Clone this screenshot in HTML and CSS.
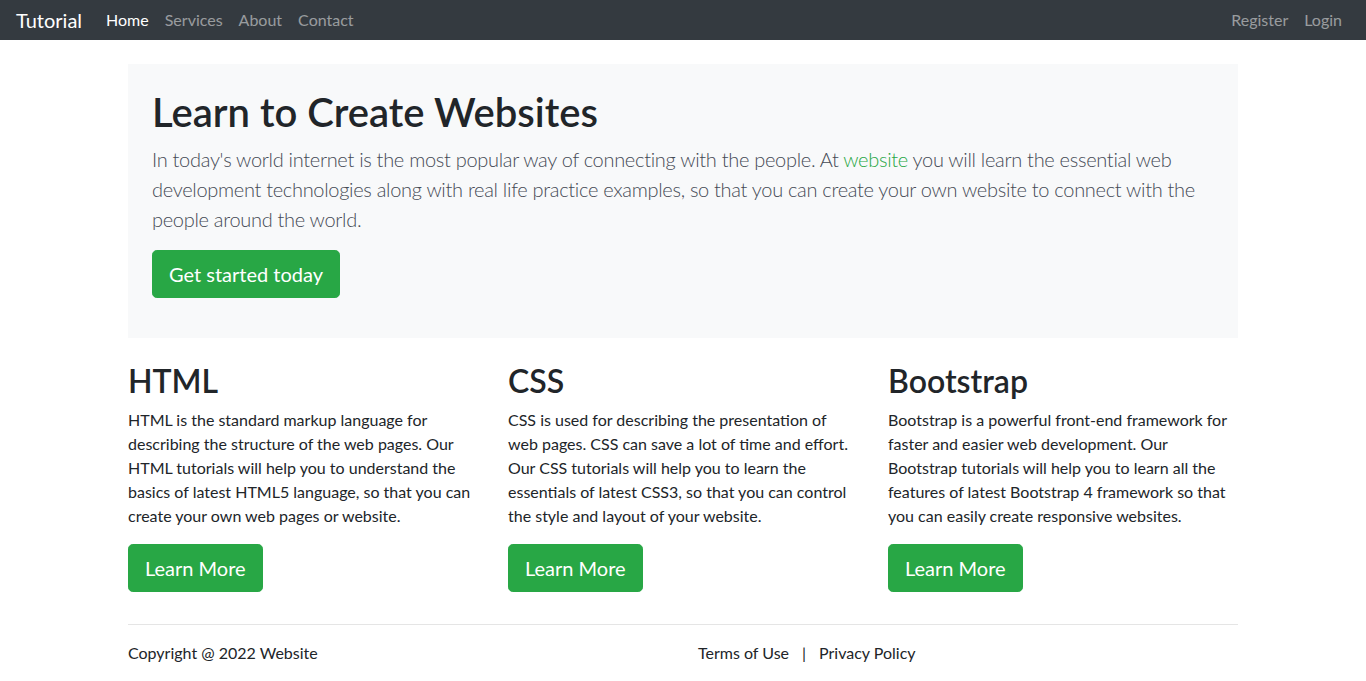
FILE: index.html
```html
<!DOCTYPE html>
<html lang="en">
<head>
<meta charset="utf-8">
<title>Tutorial</title>
<link rel="stylesheet" href="styles.css">
</head>
<body>
<nav class="navbar">
  <a class="brand" href="#">Tutorial</a>
  <ul class="nav">
    <li><a class="nav-link active" href="#">Home</a></li>
    <li><a class="nav-link" href="#">Services</a></li>
    <li><a class="nav-link" href="#">About</a></li>
    <li><a class="nav-link" href="#">Contact</a></li>
  </ul>
  <ul class="nav nav-right">
    <li><a class="nav-link" href="#">Register</a></li>
    <li><a class="nav-link" href="#">Login</a></li>
  </ul>
</nav>
<div class="container">
  <div class="jumbotron">
    <h1 class="hero-title">Learn to Create Websites</h1>
    <p class="lead">In today's world internet is the most popular way of connecting with the people. At <a class="green-link" href="#">website</a> you will learn the essential web development technologies along with real life practice examples, so that you can create your own website to connect with the people around the world.</p>
    <p class="btn-wrap"><a class="btn" href="#">Get started today</a></p>
  </div>
  <div class="row">
    <div class="col">
      <h2 class="card-title">HTML</h2>
      <p class="card-text">HTML is the standard markup language for describing the structure of the web pages. Our HTML tutorials will help you to understand the basics of latest HTML5 language, so that you can create your own web pages or website.</p>
      <p class="btn-wrap"><a class="btn" href="#">Learn More</a></p>
    </div>
    <div class="col">
      <h2 class="card-title">CSS</h2>
      <p class="card-text">CSS is used for describing the presentation of web pages. CSS can save a lot of time and effort. Our CSS tutorials will help you to learn the essentials of latest CSS3, so that you can control the style and layout of your website.</p>
      <p class="btn-wrap"><a class="btn" href="#">Learn More</a></p>
    </div>
    <div class="col">
      <h2 class="card-title">Bootstrap</h2>
      <p class="card-text">Bootstrap is a powerful front-end framework for faster and easier web development. Our Bootstrap tutorials will help you to learn all the features of latest Bootstrap 4 framework so that you can easily create responsive websites.</p>
      <p class="btn-wrap"><a class="btn" href="#">Learn More</a></p>
    </div>
  </div>
  <hr class="divider">
  <footer class="footer">
    <div class="footer-col">Copyright @ 2022 Website</div>
    <div class="footer-col"><a class="foot-link" href="#">Terms of Use</a><span class="sep">|</span><a class="foot-link" href="#">Privacy Policy</a></div>
  </footer>
</div>
</body>
</html>
```
FILE: styles.css
```css
* { box-sizing: border-box; }
html, body { margin: 0; padding: 0; }
body {
  font-family: "Lato", "Noto Sans", sans-serif;
  font-size: 16px;
  line-height: 1.5;
  color: #212529;
  background: #fff;
}
a { text-decoration: none; }

.navbar {
  display: flex;
  align-items: center;
  height: 40px;
  padding: 0 16px;
  background: #343a40;
}
.brand {
  font-size: 20px;
  line-height: 30px;
  color: #fff;
  margin-right: 16px;
}
.nav {
  display: flex;
  list-style: none;
  margin: 0;
  padding: 0;
}
.nav-right { margin-left: auto; }
.nav-link {
  display: block;
  padding: 8px;
  line-height: 24px;
  color: rgba(255, 255, 255, 0.5);
}
.nav-link.active { color: #fff; }

.container {
  width: 1110px;
  margin: 0 auto;
}
.jumbotron {
  margin-top: 24px;
  margin-bottom: 24px;
  padding: 24px;
  background: #f8f9fa;
}
.hero-title {
  margin: 0 0 8px;
  font-size: 40px;
  font-weight: 600;
  line-height: 48px;
}
.lead {
  margin: 0 0 16px;
  font-size: 20px;
  font-weight: 300;
  line-height: 30px;
  letter-spacing: -0.3px;
  color: #454a55;
}
.green-link { color: #28a745; }
.btn-wrap { margin: 0 0 16px; }
.btn {
  display: inline-block;
  padding: 8px 16px;
  font-size: 20px;
  line-height: 30px;
  color: #fff;
  background: #28a745;
  border: 1px solid #28a745;
  border-radius: 4.8px;
}

.row {
  display: grid;
  grid-template-columns: repeat(3, 1fr);
  column-gap: 30px;
}
.card-title {
  margin: 0 0 8px;
  font-size: 32px;
  font-weight: 600;
  line-height: 38px;
}
.card-text { margin: 0 0 16px; }

.divider {
  margin: 16px 0;
  border: 0;
  border-top: 1px solid rgba(0, 0, 0, 0.1);
}
.footer {
  display: grid;
  grid-template-columns: 1fr 1fr;
  column-gap: 30px;
  padding-bottom: 16px;
}
.foot-link { color: #212529; }
.sep { margin: 0 13px; }
```
